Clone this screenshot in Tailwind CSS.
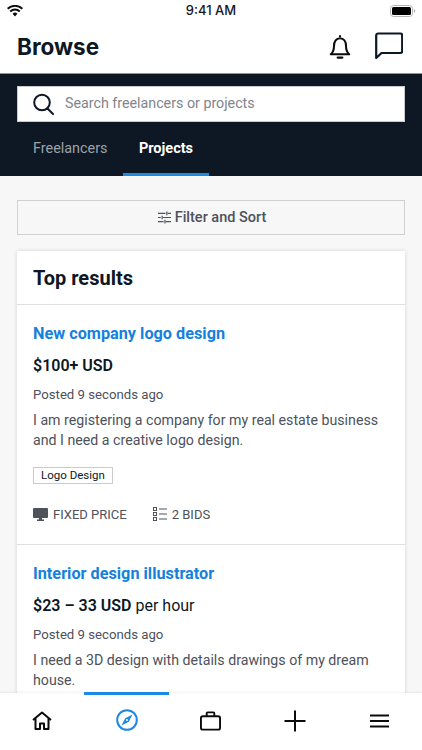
<!DOCTYPE html>
<html lang="en">
<head>
    <meta charset="UTF-8">
    <meta name="viewport" content="width=device-width, initial-scale=1.0">
    <title>Browse</title>
    <script src="https://cdn.jsdelivr.net/npm/@tailwindcss/browser@4"></script>
</head>
<body class="bg-[#f7f7f7] font-['Roboto',sans-serif]">
<div class="relative w-[422px] h-[750px] overflow-hidden flex flex-col">
    <!-- Status bar -->
    <div class="h-[22px] bg-white flex items-center justify-between pl-[7px] pr-[6px] shrink-0">
        <svg class="w-[16px] h-[12px]" viewBox="0 0 16 12"><path d="M8 11.500 5.600 8.800a3.400 3.400 0 0 1 4.800 0zM3.900 7.200 2.600 5.800a7.700 7.700 0 0 1 10.800 0l-1.300 1.400a5.800 5.800 0 0 0-8.200 0zM1.300 4.500 0 3.100a11.500 11.500 0 0 1 16 0l-1.300 1.400a9.600 9.600 0 0 0-13.400 0z" fill="#0b0b0b"/></svg>
        <span class="absolute left-0 right-0 text-center text-[13px] font-['Inter',sans-serif] font-medium text-[#16181d]">9:41 AM</span>
        <svg class="w-[26px] h-[12px]" viewBox="0 0 26 12"><rect x="0.500" y="0.500" width="22" height="11" rx="3" fill="none" stroke="#b5b5b5"/><rect x="2" y="2" width="19" height="8" rx="1.500" fill="#000"/><rect x="24" y="4.500" width="1" height="3" fill="#aaa"/></svg>
    </div>
    <!-- Header -->
    <div class="h-[51px] bg-white flex items-center justify-between pl-[17px] pr-[19px] shrink-0">
        <h1 class="text-[22.500px] font-['Inter',sans-serif] font-bold text-[#0e1724] -mt-[2px]">Browse</h1>
        <div class="flex items-center gap-[23px] -mt-[3px]">
            <svg class="w-[24px] h-[29px]" viewBox="0 0 26 30" fill="none" stroke="#0b0b0b" stroke-width="2.200"><path d="M3 23.500c2.500-2 3.500-4 3.500-9 0-5 2.500-8.500 6.500-8.500s6.500 3.500 6.500 8.500c0 5 1 7 3.500 9z" stroke-linejoin="round"/><circle cx="13" cy="3.800" r="1.200" fill="#0b0b0b" stroke="none"/><path d="M10.500 27h5" stroke-width="2.400" stroke-linecap="round"/></svg>
            <svg class="w-[28px] h-[28px]" viewBox="0 0 28 28" fill="none" stroke="#0e1724" stroke-width="2.200"><path d="M1.200 26V3.500a2 2 0 0 1 2-2h22a2 2 0 0 1 2 2v15.500a2 2 0 0 1-2 2H6.500z" stroke-linejoin="round"/></svg>
        </div>
    </div>
    <!-- Search and tabs -->
    <div class="h-[103px] bg-[#0e1724] border-t border-[#8f959c] shrink-0 px-[17px] pt-[12px] flex flex-col">
        <div class="h-[36px] bg-white border border-[#c9cbce] flex items-center pl-[14px] shrink-0">
            <svg class="w-[22px] h-[24px]" viewBox="0 0 22 24" fill="none" stroke="#0e1724" stroke-width="2"><circle cx="10" cy="10.500" r="7.800"/><path d="m15.500 16.500 5.500 5.500" stroke-linecap="round"/></svg>
            <span class="ml-[11px] text-[14.250px] text-[#80858c]">Search freelancers or projects</span>
        </div>
        <div class="flex flex-1">
            <div class="w-[106px] pl-[16px] flex items-center text-[14.400px] text-[#9ca2a9]">Freelancers</div>
            <div class="w-[86px] flex items-center justify-center text-[14.500px] font-bold text-white border-b-[3px] border-[#1e88e5] pt-[3px]">Projects</div>
        </div>
    </div>
    <!-- Content -->
    <div class="px-[17px] pt-[24px] flex-1 min-h-0">
        <div class="h-[35px] border-[1.500px] border-[#cfd0d2] flex items-center justify-center gap-[4px] pl-[2px] text-[14.500px] font-medium text-[#4d525b]">
            <svg class="w-[13px] h-[13px]" viewBox="0 0 14 14" fill="none" stroke="#4d525b" stroke-width="1.300"><path d="M0 2.500h8M10.500 2.500H14M9.500 0.500v4M0 7h3M5.500 7H14M4.500 5v4M0 11.500h6M8.500 11.500H14M7.500 9.500v4"/></svg>
            Filter and Sort
        </div>
        <div class="mt-[16px] bg-white shadow-[0_0_4px_rgba(0,0,0,0.15)] h-[480px]">
            <div class="h-[54px] pl-[16px] flex items-center text-[20px] font-bold text-[#0e1724] border-b border-[#dedfe1]">Top results</div>
            <!-- Project 1 -->
            <div class="h-[240px] pl-[16px] pr-[12px] pt-[19px] border-b border-[#dedfe1]">
                <div class="text-[16.250px] leading-[20px] font-bold text-[#1581dd]">New company logo design</div>
                <div class="mt-[10px] text-[16px] leading-[24px] font-semibold text-[#0e1724]">$100+ USD</div>
                <div class="mt-[7px] text-[13.200px] leading-[20px] text-[#4d525b]">Posted 9 seconds ago</div>
                <p class="mt-[5px] text-[14.200px] leading-[20px] text-[#4d525b]">I am registering a company for my real estate business and I need a creative logo design.</p>
                <div class="mt-[17px] w-[80px] h-[17px] border border-[#c9cbce] flex items-center justify-center text-[11.500px] text-[#0e1724]">Logo Design</div>
                <div class="mt-[21px] flex items-center text-[13px] text-[#4d525b]">
                    <svg class="w-[15px] h-[13px] mr-[5px]" viewBox="0 0 15 13"><path d="M0 1a1 1 0 0 1 1-1h13a1 1 0 0 1 1 1v8a1 1 0 0 1-1 1H9v1.500h2V13H4v-1.500h2V10H1a1 1 0 0 1-1-1z" fill="#4d525b"/></svg>
                    <span>FIXED PRICE</span>
                    <svg class="w-[14px] h-[15px] ml-[26px] mr-[5px]" viewBox="0 0 14 15" fill="none" stroke="#4d525b"><rect x="0.500" y="0.500" width="3" height="3"/><rect x="0.500" y="5.500" width="3" height="3"/><rect x="0.500" y="10.500" width="3" height="3"/><path d="M6 2h8M6 7h8M6 12h8"/></svg>
                    <span>2 BIDS</span>
                </div>
            </div>
            <!-- Project 2 -->
            <div class="pl-[16px] pr-[12px] pt-[19px]">
                <div class="text-[16.250px] leading-[20px] font-bold text-[#1581dd]">Interior design illustrator</div>
                <div class="mt-[10px] text-[16px] leading-[24px] text-[#0e1724]"><span class="font-semibold">$23 – 33 USD</span> per hour</div>
                <div class="mt-[7px] text-[13.200px] leading-[20px] text-[#4d525b]">Posted 9 seconds ago</div>
                <p class="mt-[5px] text-[14.200px] leading-[20px] text-[#4d525b]">I need a 3D design with details drawings of my dream house.</p>
            </div>
        </div>
    </div>
    <!-- Bottom nav -->
    <div class="absolute left-0 right-0 bottom-0 h-[57px] bg-white grid grid-cols-5 shadow-[0_-1px_2px_rgba(0,0,0,0.06)]">
        <div class="flex items-center justify-center pb-[2px]">
            <svg class="w-[20px] h-[19px]" viewBox="0 0 20 19" fill="none" stroke="#0b0b0b" stroke-width="2" stroke-linejoin="round"><path d="M1 9 10 1.500 19 9M3.500 7.500V18H8v-5.500h4V18h4.500V7.500"/></svg>
        </div>
        <div class="flex items-center justify-center pb-[5px] border-t-[3px] border-[#1e88e5] -mt-[1px]">
            <svg class="w-[22px] h-[22px]" viewBox="0 0 22 22"><circle cx="11" cy="11" r="9.800" fill="none" stroke="#1e88e5" stroke-width="2"/><path d="M16.500 5.500 12.800 12.800 5.500 16.500 9.200 9.200z" fill="#1e88e5"/><circle cx="11" cy="11" r="1" fill="#fff"/></svg>
        </div>
        <div class="flex items-center justify-center pb-[2px]">
            <svg class="w-[21px] h-[20px]" viewBox="0 0 22 20" fill="none" stroke="#0b0b0b" stroke-width="2"><rect x="1" y="5" width="20" height="14" rx="2"/><path d="M7 5V2a1 1 0 0 1 1-1h6a1 1 0 0 1 1 1v3"/></svg>
        </div>
        <div class="flex items-center justify-center pb-[2px]">
            <svg class="w-[22px] h-[22px]" viewBox="0 0 22 22" stroke="#0b0b0b" stroke-width="2"><path d="M0.500 11h21M11 0.500v21"/></svg>
        </div>
        <div class="flex items-center justify-center pb-[2px]">
            <svg class="w-[19px] h-[14px]" viewBox="0 0 19 14" stroke="#0b0b0b" stroke-width="2"><path d="M0 1.500h19M0 7h19M0 12.500h19"/></svg>
        </div>
    </div>
</div>
</body>
</html>
